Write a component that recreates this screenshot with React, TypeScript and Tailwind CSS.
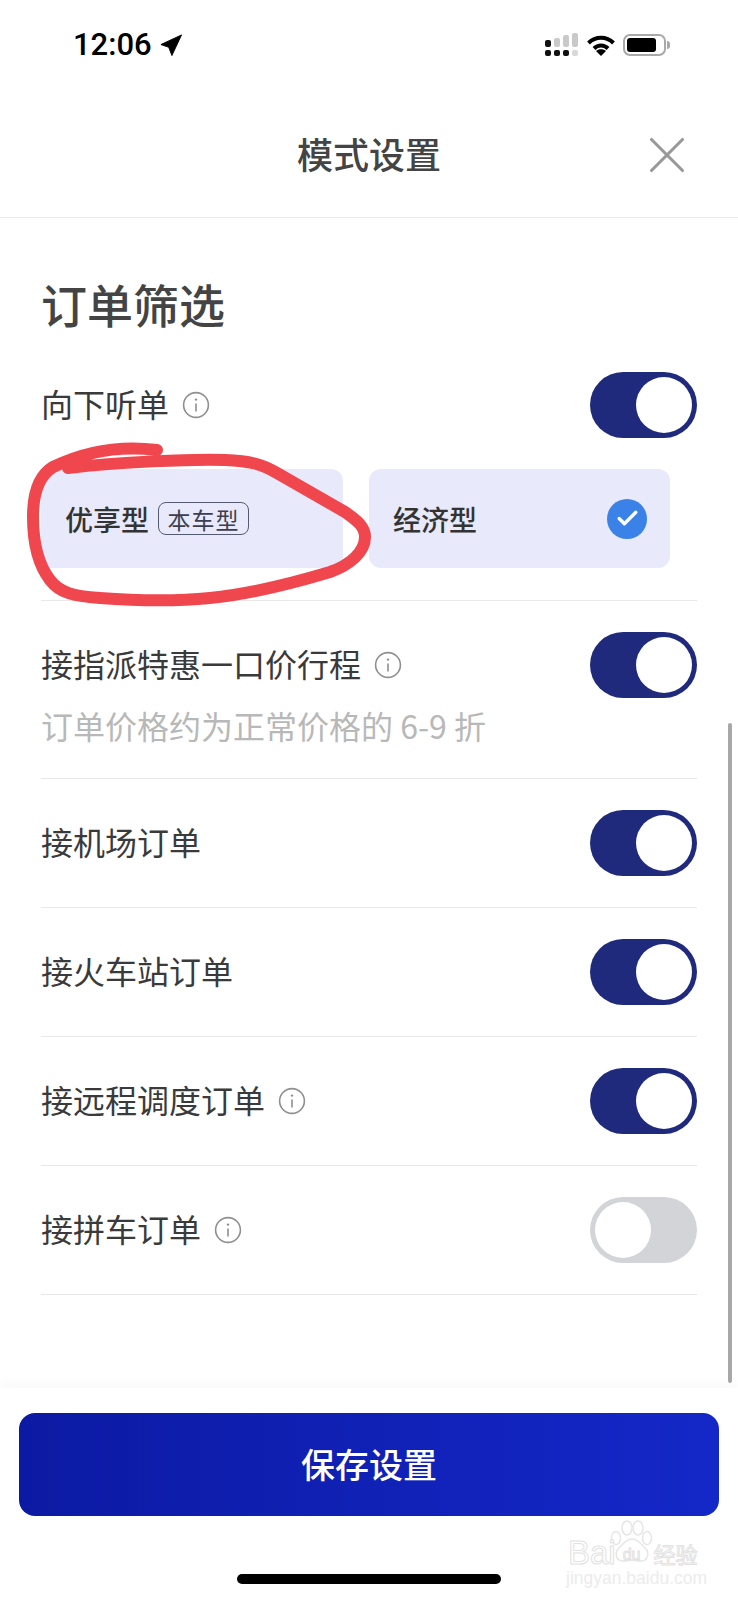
import React from "react";
import { Check, X } from "lucide-react";

const InfoIcon = ({ className }: { className?: string }) => (
  <svg viewBox="0 0 28 28" className={className} fill="none">
    <circle cx="14" cy="14" r="12.4" stroke="#8f8f8f" strokeWidth="1.6" />
    <circle cx="14" cy="8.6" r="1.2" fill="#8f8f8f" />
    <path d="M14 12.5v8" stroke="#8f8f8f" strokeWidth="1.6" />
  </svg>
);

const Toggle = ({ on = true }: { on?: boolean }) =>
  on ? (
    <div className="flex h-[66px] w-[107px] shrink-0 items-center justify-end rounded-full bg-[#1f2a7c] pr-[5px]">
      <div className="h-[56px] w-[56px] rounded-full bg-white" />
    </div>
  ) : (
    <div className="flex h-[66px] w-[107px] shrink-0 items-center rounded-full bg-[#d3d4d8] pl-[5px]">
      <div className="h-[56px] w-[56px] rounded-full bg-white" />
    </div>
  );

const Label = ({ text, info }: { text: string; info?: boolean }) => (
  <div className="flex items-center gap-[13px]">
    <span className="mb-[4px] text-[32px] leading-[44px] text-[#3a3a3a]">{text}</span>
    {info && <InfoIcon className="h-[28px] w-[28px]" />}
  </div>
);

const Row = ({ label, info, on = true }: { label: string; info?: boolean; on?: boolean }) => (
  <div className="flex h-[129px] items-center justify-between border-b border-[#e8e8e8]">
    <Label text={label} info={info} />
    <Toggle on={on} />
  </div>
);

const StatusIcons = () => (
  <div className="flex items-center gap-[8px]">
    <svg viewBox="0 0 34 25" className="h-[25px] w-[34px]">
      <rect x="0" y="7" width="6" height="7" rx="2" fill="#111" />
      <rect x="9" y="5" width="6" height="9" rx="2" fill="#c9c9c9" />
      <rect x="18" y="2" width="6" height="12" rx="2" fill="#c9c9c9" />
      <rect x="27" y="0" width="6" height="14" rx="2" fill="#c9c9c9" />
      <rect x="0" y="17" width="6" height="6" rx="2" fill="#111" />
      <rect x="9" y="17" width="6" height="6" rx="2" fill="#111" />
      <rect x="18" y="17" width="6" height="6" rx="2" fill="#111" />
      <rect x="27" y="17" width="6" height="6" rx="2" fill="#d8d8d8" />
    </svg>
    <svg viewBox="0 0 28 21" className="h-[21px] w-[28px]" fill="none" stroke="#000" strokeWidth="4">
      <path d="M1.5 8C8.5 1 19.5 1 26.5 8" />
      <path d="M7 13.5c4-4 10-4 14 0" />
      <path d="M14 21l-5-5c2.5-2.5 7.5-2.5 10 0z" fill="#000" stroke="none" />
    </svg>
    <div className="flex items-center gap-[1px]">
      <div className="flex h-[22px] w-[43px] items-center rounded-[7px] border-2 border-[#a9a9a9] p-[2px]">
        <div className="h-full w-[29px] rounded-[3px] bg-black" />
      </div>
      <div className="h-[8px] w-[3px] rounded-r-full bg-[#a9a9a9]" />
    </div>
  </div>
);

const Baidu = () => (
  <div className="absolute left-[566px] top-[1520px] h-[68px] w-[132px] font-['Liberation_Sans',sans-serif]">
    <svg viewBox="0 0 44 50" className="absolute left-[44px] top-0 h-[50px] w-[44px]" fill="#fff" stroke="#e6e6e6" strokeWidth="1.5">
      <ellipse cx="6" cy="18" rx="4.5" ry="6.5" />
      <ellipse cx="17" cy="8" rx="5" ry="7" />
      <ellipse cx="28" cy="8" rx="5" ry="7" />
      <ellipse cx="37" cy="18" rx="4.5" ry="6.5" />
      <path d="M22 19c6 0 9 5 13 9 5 5 3 13-4 13-4 0-6-1-9-1s-5 1-9 1c-7 0-9-8-4-13 4-4 7-9 13-9z" />
    </svg>
    <div className="absolute left-0 top-[20px] flex h-[26px] items-center">
      <span className="ml-[2px] text-[33px] leading-[26px] text-white [-webkit-text-stroke:1px_#e2e2e2]">Bai</span>
      <span className="ml-[7px] mt-[4px] text-[16px] leading-[18px] text-white [-webkit-text-stroke:1px_#e2e2e2]">du</span>
      <span className="ml-[13px] text-[22px] leading-[26px] font-['Noto_Sans_CJK_SC',sans-serif] text-white [-webkit-text-stroke:1px_#e2e2e2]">经验</span>
    </div>
    <div className="absolute left-0 top-[48px] text-[17.5px] leading-[20px] text-[#ececec]">jingyan.baidu.com</div>
  </div>
);

export default function App() {
  return (
    <div className="relative flex h-[1600px] w-[738px] flex-col overflow-hidden bg-white font-['Noto_Sans_CJK_SC',sans-serif]">
      <div className="flex h-[93px] items-center justify-between pb-[3px] pl-[73px] pr-[68px]">
        <div className="flex items-center gap-[8px]">
          <span className="text-[31px] leading-[36px] font-medium text-black font-['Roboto',sans-serif]">12:06</span>
          <svg viewBox="0 0 24 24" className="h-[22px] w-[22px]" fill="#000">
            <path d="M23.5 1 1 11.5l8.5 3L13 23.5z" stroke="#000" strokeWidth="1" strokeLinejoin="round" />
          </svg>
        </div>
        <StatusIcons />
      </div>

      <div className="relative flex h-[125px] items-center justify-center border-b border-[#ebebeb]">
        <span className="mb-[4px] text-[36px] leading-[50px] font-medium text-[#444444]">模式设置</span>
        <X className="absolute right-[40px] top-[31px] h-[62px] w-[62px] text-[#999999]" strokeWidth={1.2} />
      </div>

      <div className="flex-1 px-[41px] pt-[55px]">
        <h1 className="pb-[2px] text-[46px] leading-[60px] font-medium text-[#444444]">订单筛选</h1>

        <div className="mt-[37px] border-b border-[#e8e8e8] pb-[32px]">
          <div className="flex items-center justify-between">
            <Label text="向下听单" info />
            <Toggle />
          </div>
          <div className="mt-[31px] flex gap-[26px] pr-[27px]">
            <div className="flex h-[99px] w-[302px] items-center gap-[9px] rounded-[12px] bg-[#e8e9fa] pl-[24px]">
              <span className="text-[28px] leading-[38px] font-medium text-[#333333]">优享型</span>
              <span className="flex h-[33px] w-[91px] items-center justify-center rounded-[8px] border border-[#555a70] text-[23px] leading-[28px] tracking-[1px] text-[#3c3f50]">
                本车型
              </span>
            </div>
            <div className="flex h-[99px] flex-1 items-center justify-between rounded-[12px] bg-[#e8e9fa] pl-[24px] pr-[23px]">
              <span className="text-[28px] leading-[38px] font-medium text-[#333333]">经济型</span>
              <div className="flex h-[40px] w-[40px] items-center justify-center rounded-full bg-[#3b82e8]">
                <Check className="h-[25px] w-[25px] text-white" strokeWidth={3.2} />
              </div>
            </div>
          </div>
        </div>

        <div className="border-b border-[#e8e8e8] pb-[32px] pt-[31px]">
          <div className="flex items-center justify-between">
            <Label text="接指派特惠一口价行程" info />
            <Toggle />
          </div>
          <p className="mt-[6px] text-[32px] leading-[42px] text-[#b8b8b8]">订单价格约为正常价格的 6-9 折</p>
        </div>

        <Row label="接机场订单" />
        <Row label="接火车站订单" />
        <Row label="接远程调度订单" info />
        <Row label="接拼车订单" info on={false} />
      </div>

      <div className="flex h-[212px] flex-col items-center bg-white px-[19px] pt-[25px] shadow-[0_-6px_10px_rgba(0,0,0,0.025)]">
        <button className="flex h-[103px] w-full items-center justify-center rounded-[16px] bg-gradient-to-r from-[#0c1aa3] to-[#1428c8] pb-[2px] text-[34px] font-medium text-white">
          保存设置
        </button>
        <div className="mt-[58px] h-[10px] w-[264px] rounded-full bg-black" />
      </div>

      {/* scrollbar */}
      <div className="absolute left-[728px] top-[723px] h-[660px] w-[4px] rounded-full bg-[#a8a8a8]" />

      {/* red marker circled over the first card */}
      <svg viewBox="0 0 738 1600" className="pointer-events-none absolute left-0 top-0 h-[1600px] w-[738px]" fill="none">
        <path
          d="M157 450C125 446 90 449 53 467C38 476 33 495 33 517C33 540 37 563 50 580C60 593 73 596 100 598C140 601 180 601 210 598C250 594 290 584 330 572C350 565 365 552 365 537C365 527 358 521 345 512L277 473C262 464 250 461 225 460C190 459 120 462 68 468"
          stroke="#f0474f"
          strokeWidth="12"
          strokeLinecap="round"
          strokeLinejoin="round"
        />
      </svg>

      <Baidu />
    </div>
  );
}
